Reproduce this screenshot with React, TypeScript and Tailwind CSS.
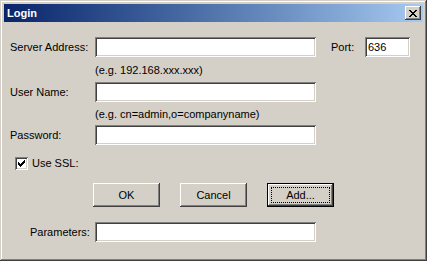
const sunken =
  "bg-white shadow-[inset_1px_1px_#808080,inset_-1px_-1px_#ffffff,inset_2px_2px_#404040,inset_-2px_-2px_#d4d0c8]";
const raised =
  "bg-[#d4d0c8] shadow-[inset_-1px_-1px_#404040,inset_1px_1px_#ffffff,inset_-2px_-2px_#808080,inset_2px_2px_#d4d0c8]";

const Field = ({ className = "", value = "" }: { className?: string; value?: string }) => (
  <div className={`h-[20px] ${sunken} flex items-center pl-[3px] ${className}`}>{value}</div>
);

const Button = ({ label, isDefault = false }: { label: string; isDefault?: boolean }) =>
  isDefault ? (
    <div className="h-[24px] w-[67px] border border-black">
      <div className={`h-full w-full ${raised} flex items-center justify-center p-[3px]`}>
        <div className="flex h-full w-full items-center justify-center border border-dotted border-black">
          {label}
        </div>
      </div>
    </div>
  ) : (
    <div className={`h-[24px] w-[67px] ${raised} flex items-center justify-center`}>{label}</div>
  );

export default function App() {
  return (
    <div
      className="h-[261px] w-[427px] bg-[#d4d0c8] p-1 text-[11px] leading-[13px] text-black shadow-[inset_-1px_-1px_#404040,inset_1px_1px_#d4d0c8,inset_-2px_-2px_#808080,inset_2px_2px_#ffffff]"
      style={{ fontFamily: '"Liberation Sans", Arial, sans-serif' }}
    >
      {/* Title bar */}
      <div className="flex h-[18px] items-center justify-between bg-gradient-to-r from-[#0a246a] to-[#a6caf0] pl-[3px] pr-[2px]">
        <span className="text-[11px] font-bold text-white">Login</span>
        <div className={`flex h-[14px] w-[16px] items-center justify-center ${raised}`}>
          <svg width="8" height="7" viewBox="0 0 8 7" shapeRendering="crispEdges">
            <path
              d="M0 0h2v1H0zM6 0h2v1H6zM1 1h2v1H1zM5 1h2v1H5zM2 2h4v1H2zM3 3h2v1H3zM2 4h4v1H2zM1 5h2v1H1zM5 5h2v1H5zM0 6h2v1H0zM6 6h2v1H6z"
              fill="#000"
            />
          </svg>
        </div>
      </div>

      {/* Client area */}
      <div className="flex flex-col pl-[6px]">
        <div className="mt-[15px] flex h-[20px] items-center">
          <span className="w-[85px]">Server Address:</span>
          <Field className="w-[221px]" />
          <span className="ml-[15px] w-[34px]">Port:</span>
          <Field className="w-[45px]" value="636" />
        </div>
        <div className="mt-[7px] pl-[85px]">(e.g. 192.168.xxx.xxx)</div>

        <div className="mt-[5px] flex h-[20px] items-center">
          <span className="w-[85px]">User Name:</span>
          <Field className="w-[221px]" />
        </div>
        <div className="mt-[6px] pl-[85px]">(e.g. cn=admin,o=companyname)</div>

        <div className="mt-[4px] flex h-[20px] items-center">
          <span className="w-[85px]">Password:</span>
          <Field className="w-[221px]" />
        </div>

        <div className="mt-[12px] flex h-[13px] items-center pl-[5px]">
          <div className={`flex h-[13px] w-[13px] items-center justify-center ${sunken}`}>
            <svg width="7" height="7" viewBox="0 0 7 7" shapeRendering="crispEdges">
              <path d="M0 2h1v3H0zM1 3h1v3H1zM2 4h1v3H2zM3 3h1v3H3zM4 2h1v3H4zM5 1h1v3H5zM6 0h1v3H6z" fill="#000" />
            </svg>
          </div>
          <span className="ml-[4px]">Use SSL:</span>
        </div>

        <div className="mt-[13px] flex pl-[83px]">
          <Button label="OK" />
          <div className="ml-[20px]">
            <Button label="Cancel" />
          </div>
          <div className="ml-[20px]">
            <Button label="Add..." isDefault />
          </div>
        </div>

        <div className="mt-[15px] flex h-[20px] items-center">
          <span className="w-[85px] pl-[20px]">Parameters:</span>
          <Field className="w-[221px]" />
        </div>
      </div>
    </div>
  );
}
